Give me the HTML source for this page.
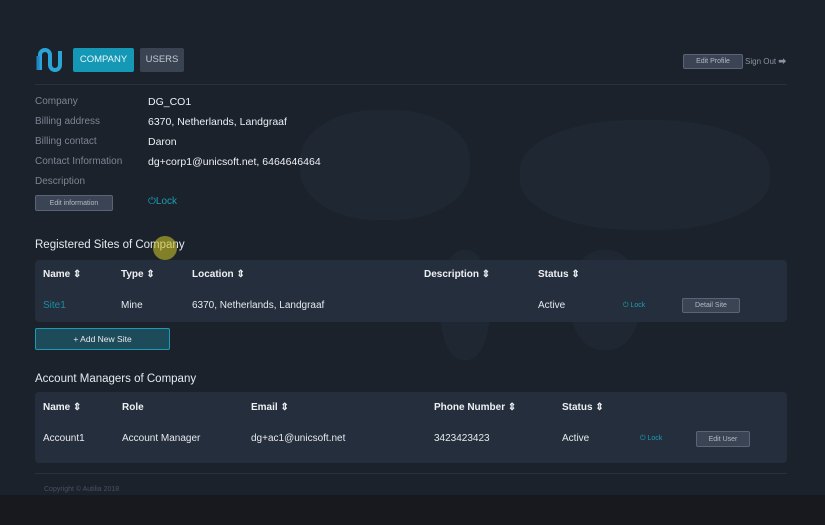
<!DOCTYPE html>
<html><head><meta charset="utf-8"><style>
*{margin:0;padding:0;box-sizing:border-box}
body{width:825px;height:525px;overflow:hidden;background:#1b222c;font-family:"Liberation Sans",sans-serif;color:#e6e9ee;position:relative}
.a{position:absolute;white-space:nowrap}
.lbl{color:#7d8593;font-size:10px}
.val{color:#eef0f3;font-size:10.5px}
.panel{position:absolute;left:35px;width:752px;background:#252e3c;border-radius:4px}
.th{font-size:10px;font-weight:bold;color:#eef0f3}
.td{font-size:10px;color:#e6e9ee}
.btn{position:absolute;border:1px solid #5a6475;background:#3a4455;color:#b4bac4;font-size:7px;display:flex;align-items:center;justify-content:center;border-radius:2px}
.lock{color:#1b9fb5;font-size:7px}
.map{position:absolute;background:#243040;opacity:.35;border-radius:45%}
</style></head><body>
<div class="map" style="left:300px;top:110px;width:170px;height:110px"></div>
<div class="map" style="left:520px;top:120px;width:250px;height:110px"></div>
<div class="map" style="left:570px;top:250px;width:70px;height:100px"></div>
<div class="map" style="left:440px;top:250px;width:50px;height:110px"></div>
<div style="position:absolute;left:0;top:495px;width:825px;height:30px;background:#17191e"></div>
<svg class="a" style="left:35px;top:46px" width="28" height="28" viewBox="0 0 28 28"><path d="M5 24V9a5 5 0 0 1 10 0v10a5 5 0 0 0 10 0V5" fill="none" stroke="#2aa6d6" stroke-width="4"/><path d="M3 24V10" stroke="#1f86c4" stroke-width="3"/></svg>
<div class="a" style="left:73px;top:48px;width:61px;height:24px;background:#1598b5;border-radius:2px;color:#eaf6fa;font-size:9.5px;text-align:center;line-height:24px">COMPANY</div>
<div class="a" style="left:140px;top:48px;width:44px;height:24px;background:#3a4352;border-radius:2px;color:#c4c9d1;font-size:9.5px;text-align:center;line-height:24px">USERS</div>
<div class="btn" style="left:683px;top:54px;width:60px;height:15px">Edit Profile</div>
<div class="a" style="left:745px;top:56px;color:#8a92a0;font-size:8px">Sign Out ⮕</div>
<div class="a" style="left:35px;top:84px;width:752px;height:1px;background:#2a323d"></div>
<div class="a lbl" style="left:35px;top:96px">Company</div><div class="a val" style="left:148px;top:96px">DG_CO1</div>
<div class="a lbl" style="left:35px;top:116px">Billing address</div><div class="a val" style="left:148px;top:116px">6370, Netherlands, Landgraaf</div>
<div class="a lbl" style="left:35px;top:136px">Billing contact</div><div class="a val" style="left:148px;top:136px">Daron</div>
<div class="a lbl" style="left:35px;top:156px">Contact Information</div><div class="a val" style="left:148px;top:156px">dg+corp1@unicsoft.net, 6464646464</div>
<div class="a lbl" style="left:35px;top:176px">Description</div>
<div class="btn" style="left:35px;top:195px;width:78px;height:16px">Edit information</div>
<div class="a" style="left:148px;top:196px;color:#1b9fb5;font-size:10px">⏻Lock</div>
<div class="a" style="left:35px;top:239px;font-size:11.5px;color:#e6e9ee">Registered Sites of Company</div>
<div class="a" style="left:153px;top:236px;width:24px;height:24px;border-radius:50%;background:rgba(200,190,40,.6)"></div>
<div class="panel" style="top:260px;height:62px"></div>
<div class="a th" style="left:43px;top:269px">Name ⇕</div><div class="a th" style="left:121px;top:269px">Type ⇕</div><div class="a th" style="left:192px;top:269px">Location ⇕</div><div class="a th" style="left:424px;top:269px">Description ⇕</div><div class="a th" style="left:538px;top:269px">Status ⇕</div>
<div class="a td" style="left:43px;top:300px;color:#1b8ea5">Site1</div><div class="a td" style="left:121px;top:300px">Mine</div><div class="a td" style="left:192px;top:300px">6370, Netherlands, Landgraaf</div><div class="a td" style="left:538px;top:300px">Active</div>
<div class="a lock" style="left:623px;top:302px">⏻ Lock</div>
<div class="btn" style="left:682px;top:298px;width:58px;height:15px">Detail Site</div>
<div class="a" style="left:35px;top:328px;width:135px;height:22px;background:#1d4b5a;border:1px solid #1a9cb5;border-radius:2px;color:#e6e9ee;font-size:8.5px;text-align:center;line-height:20px">+ Add New Site</div>
<div class="a" style="left:35px;top:373px;font-size:11.5px;color:#e6e9ee">Account Managers of Company</div>
<div class="panel" style="top:392px;height:71px"></div>
<div class="a th" style="left:43px;top:402px">Name ⇕</div><div class="a th" style="left:122px;top:402px">Role</div><div class="a th" style="left:251px;top:402px">Email ⇕</div><div class="a th" style="left:434px;top:402px">Phone Number ⇕</div><div class="a th" style="left:562px;top:402px">Status ⇕</div>
<div class="a td" style="left:43px;top:433px">Account1</div><div class="a td" style="left:122px;top:433px">Account Manager</div><div class="a td" style="left:251px;top:433px">dg+ac1@unicsoft.net</div><div class="a td" style="left:434px;top:433px">3423423423</div><div class="a td" style="left:562px;top:433px">Active</div>
<div class="a lock" style="left:640px;top:435px">⏻ Lock</div>
<div class="btn" style="left:696px;top:431px;width:54px;height:16px">Edit User</div>
<div class="a" style="left:35px;top:473px;width:752px;height:1px;background:#2a323d"></div>
<div class="a" style="left:44px;top:486px;font-size:7px;color:#4a5260">Copyright © Autilia 2018</div>
</body></html>
